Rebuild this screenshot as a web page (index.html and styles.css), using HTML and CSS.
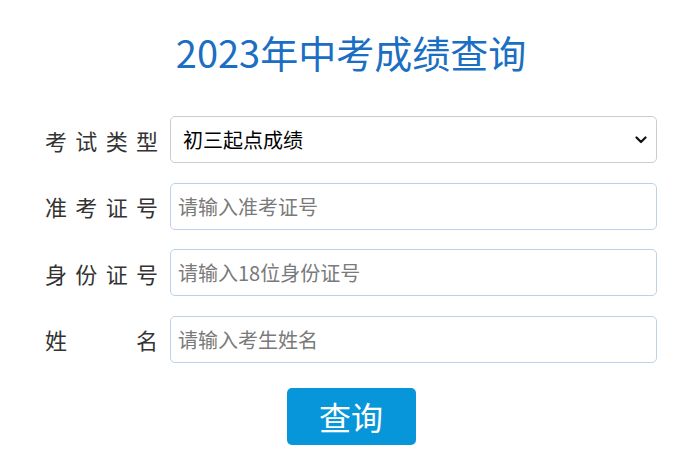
FILE: index.html
```html
<!DOCTYPE html>
<html lang="zh-CN">
<head>
<meta charset="utf-8">
<title>2023年中考成绩查询</title>
<link rel="stylesheet" href="styles.css">
</head>
<body>
<div class="page">
  <h1 class="title">2023年中考成绩查询</h1>
  <form class="form">
    <div class="row">
      <label class="label">考试类型</label>
      <div class="select-wrap">
        <select class="field select">
          <option>初三起点成绩</option>
        </select>
        <svg class="chev" width="12" height="8" viewBox="0 0 12 8"><path d="M1.5 1.5 L6 6 L10.5 1.5" fill="none" stroke="#111" stroke-width="2.2" stroke-linecap="round" stroke-linejoin="round"/></svg>
      </div>
    </div>
    <div class="row">
      <label class="label">准考证号</label>
      <input class="field input" type="text" placeholder="请输入准考证号">
    </div>
    <div class="row">
      <label class="label">身份证号</label>
      <input class="field input" type="text" placeholder="请输入18位身份证号">
    </div>
    <div class="row">
      <label class="label">姓名</label>
      <input class="field input" type="text" placeholder="请输入考生姓名">
    </div>
    <div class="actions">
      <button type="button" class="btn">查询</button>
    </div>
  </form>
</div>
</body>
</html>
```

FILE: styles.css
```css
html, body {
  margin: 0;
  padding: 0;
  background: #ffffff;
}
body {
  font-family: "Noto Sans CJK SC", "Noto Sans", sans-serif;
}
.page {
  width: 612px;
  margin-left: 45px;
  padding-top: 24px;
}
.title {
  margin: 0;
  text-align: center;
  font-size: 38px;
  font-weight: 400;
  line-height: 56px;
  color: #1a6ec3;
}
.form {
  margin-top: 36px;
  display: flex;
  flex-direction: column;
  gap: 19.5px;
}
.row {
  display: flex;
  align-items: center;
  height: 47px;
}
.label {
  width: 113px;
  margin-right: 12px;
  flex: none;
  font-size: 22px;
  color: #333333;
  text-align: justify;
  text-align-last: justify;
  line-height: 30px;
}
.select-wrap {
  position: relative;
  flex: 1;
  height: 47px;
}
.field {
  box-sizing: border-box;
  height: 47px;
  border-radius: 5px;
  font-family: "Noto Sans CJK SC", "Noto Sans", sans-serif;
  font-size: 20px;
  outline: none;
  background: #ffffff;
  margin: 0;
}
.select {
  width: 100%;
  appearance: none;
  -webkit-appearance: none;
  border: 1px solid #c9cdd2;
  padding: 0 30px 0 12px;
  color: #000000;
}
.chev {
  position: absolute;
  right: 10px;
  top: 20px;
  pointer-events: none;
}
.input {
  flex: 1;
  border: 1px solid #bcd2e6;
  padding: 0 7px;
  color: #333333;
}
.input::placeholder {
  color: #7a7a7a;
}
.actions {
  display: flex;
  justify-content: center;
  margin-top: 5.5px;
}
.btn {
  width: 129px;
  height: 57px;
  border: none;
  border-radius: 5px;
  background: #0896db;
  color: #ffffff;
  font-family: "Noto Sans CJK SC", "Noto Sans", sans-serif;
  font-size: 32px;
  line-height: 57px;
  padding: 0;
}
```
